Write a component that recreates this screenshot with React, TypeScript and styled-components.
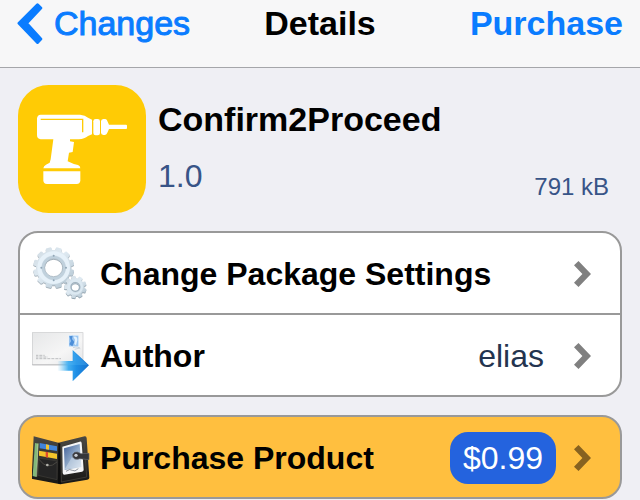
import React from "react";
import styled, { createGlobalStyle } from "styled-components";

const GlobalStyle = createGlobalStyle`
  *, *::before, *::after { box-sizing: border-box; }
  body {
    margin: 0;
    background: #efeff4;
    color: #000;
    font-family: "Liberation Sans", Arial, sans-serif;
  }
  button { font: inherit; color: inherit; border: 0; background: none; padding: 0; cursor: pointer; }
  h1, h2, p, ul { margin: 0; padding: 0; }
  svg { display: block; flex: none; }
`;

const NavBar = styled.header`
  display: grid;
  grid-template-columns: 1fr auto 1fr;
  align-items: start;
  height: 68px;
  padding: 3px 17px 0;
  background: #f7f7f8;
  border-bottom: 1px solid #a5a6aa;
  font-size: 34px;
  line-height: 40px;
`;

const BackLink = styled.a`
  display: flex;
  gap: 11px;
  justify-self: start;
  color: #0a7cff;
  text-decoration: none;
  -webkit-text-stroke: 1px currentColor;
`;

const NavTitle = styled.h1`
  font-size: 34px;
  line-height: 40px;
`;

const NavAction = styled.button`
  && {
    justify-self: end;
    color: #0a7cff;
    font-weight: 700;
  }
`;

const Content = styled.main`
  display: flex;
  flex-direction: column;
  gap: 18px;
  padding: 17px 18px 0;
`;

const PackageHeader = styled.section`
  display: flex;
  gap: 12px;
`;

const PackageText = styled.div`
  flex: 1;
  display: flex;
  flex-direction: column;
  gap: 19px;
  padding-top: 14px;
`;

const PackageName = styled.h2`
  font-size: 34px;
  line-height: 40px;
`;

const Version = styled.p`
  color: #385487;
  font-size: 32px;
  line-height: 36px;
`;

const Size = styled.p`
  align-self: flex-end;
  padding: 0 13px 12px 0;
  color: #385487;
  font-size: 24px;
  line-height: 28px;
`;

const Card = styled.ul<{ $highlight?: boolean }>`
  list-style: none;
  border: 2px solid #999;
  border-radius: 20px;
  overflow: hidden;
  background: ${(p) => (p.$highlight ? "#ffbf3f" : "#fff")};
`;

const CardItem = styled.li`
  & + & { border-top: 2px solid #999; }
`;

const RowButton = styled.button`
  && {
    display: flex;
    align-items: center;
    width: 100%;
    height: 80px;
    padding: 2px 29px 0 12px;
    font-size: 32px;
    line-height: 36px;
    text-align: left;
  }
`;

const RowLabel = styled.span`
  flex: 1;
  margin-left: 10px;
  font-weight: 700;
`;

const RowValue = styled.span`
  margin-right: 30px;
  color: #24344f;
`;

const Price = styled.span`
  margin-right: 18px;
  padding: 8px 13px;
  border-radius: 18px;
  background: #2463de;
  color: #fff;
`;

function BackChevron() {
  return (
    <svg width="26" height="42" viewBox="0 0 26 42" aria-hidden="true">
      <path
        d="M2 20.300 L20.500 1.800 L23.800 5 L9.500 20.300 L23.800 36 L20.500 39.500 Z"
        fill="#0a7cff"
        stroke="#0a7cff"
        strokeWidth="3"
        strokeLinejoin="round"
      />
    </svg>
  );
}

function Disclosure({ color = "#808080" }: { color?: string }) {
  return (
    <svg width="17" height="26" viewBox="0 0 17 26" aria-hidden="true">
      <path d="M4.500 0 L17 13 L4.500 26 L0 21.700 L8.400 13 L0 4.300 Z" fill={color} />
    </svg>
  );
}

function DrillIcon() {
  return (
    <svg width="128" height="128" viewBox="24 15 384 384" role="img" aria-label="Tweak">
      <rect x="24" y="15" width="384" height="384" rx="92" fill="#ffcb05" />
      <g fill="#fff">
        <path d="M92 104 H210 Q226 106 234 113 L246 119 V163 L234 168 Q224 177 206 178 H180 V184 L192 186 L188 216 L177 218 L173 244 Q188 252 204 255 Q211 257 211 265 H100 Q101 257 108 254 L119 248 L122 238 L130 178 H92 Q81 176 81 165 V115 Q82 105 92 104 Z" />
        <path d="M100 274 H211 V301 Q211 312 200 312 H111 Q100 312 100 301 Z" />
        <rect x="250" y="117" width="20" height="49" rx="7" />
        <path d="M280 117 H286 Q291 118 293 125 L297 134 H348 Q351 134 351 137 V145 Q351 147 348 147 H297 L292 158 Q290 164 285 165 H280 Q273 164 273 158 V124 Q273 118 280 117 Z" />
      </g>
      <path d="M92 118 H218 V157" fill="none" stroke="#ffcb05" strokeWidth="4" />
    </svg>
  );
}

function gearPath(cx: number, cy: number, outer: number, root: number, hole: number, teeth: number) {
  const points: string[] = [];
  const step = (Math.PI * 2) / teeth;
  const profile: [number, number][] = [[-0.34, root], [-0.3, outer - 3], [-0.22, outer], [0.22, outer], [0.3, outer - 3], [0.34, root]];
  for (let i = 0; i < teeth; i++) {
    for (const [offset, r] of profile) {
      const a = (i + 0.5 + offset) * step;
      points.push(`${(cx + r * Math.cos(a)).toFixed(1)} ${(cy + r * Math.sin(a)).toFixed(1)}`);
    }
  }
  return `M${points.join("L")}Z M${cx - hole} ${cy}a${hole} ${hole} 0 1 0 ${hole * 2} 0a${hole} ${hole} 0 1 0 ${-hole * 2} 0Z`;
}

function GearsIcon() {
  const big = gearPath(131, 128, 62, 53, 27, 12);
  const small = gearPath(196, 186, 34, 27, 11, 9);
  return (
    <svg width="58" height="56" viewBox="66 63 174 168" aria-hidden="true">
      <defs>
        <linearGradient id="steel" x1="0" y1="0" x2="1" y2="1">
          <stop offset="0" stopColor="#cfdae2" />
          <stop offset="0.45" stopColor="#dfeaf2" />
          <stop offset="1" stopColor="#adc0cd" />
        </linearGradient>
      </defs>
      <path d={big} transform="translate(0 3)" fill="#a5b1ba" fillRule="evenodd" />
      <path d={big} fill="url(#steel)" fillRule="evenodd" />
      <circle cx="131" cy="128" r="43" fill="none" stroke="#e6f1f9" strokeWidth="12" />
      <circle cx="131" cy="128" r="32" fill="none" stroke="#c0d1dd" strokeWidth="8" />
      <circle cx="131" cy="128" r="27" fill="none" stroke="#9eadb8" strokeWidth="2" />
      <g fill="#91a6b6">
        <circle cx="131" cy="92" r="3" />
        <circle cx="131" cy="166" r="3" />
        <circle cx="94" cy="128" r="3" />
        <circle cx="168" cy="128" r="3" />
      </g>
      <path d={small} transform="translate(0 3)" fill="#95a5b0" fillRule="evenodd" />
      <path d={small} fill="url(#steel)" fillRule="evenodd" />
      <circle cx="196" cy="186" r="20" fill="none" stroke="#dce9f2" strokeWidth="6" />
      <circle cx="196" cy="186" r="13" fill="none" stroke="#9fb1be" strokeWidth="4" />
    </svg>
  );
}

function MailIcon() {
  return (
    <svg width="58" height="56" viewBox="66 39 174 168" aria-hidden="true">
      <defs>
        <linearGradient id="paper" x1="0" y1="0" x2="1" y2="1">
          <stop offset="0" stopColor="#e6e7e8" />
          <stop offset="0.6" stopColor="#f6f6f6" />
          <stop offset="1" stopColor="#e4e5e7" />
        </linearGradient>
        <linearGradient id="arrow" x1="0" y1="0" x2="1" y2="0">
          <stop offset="0" stopColor="#6cc6f5" stopOpacity="0" />
          <stop offset="0.35" stopColor="#43aef0" />
          <stop offset="0.6" stopColor="#1e8fe6" />
          <stop offset="1" stopColor="#1672cd" />
        </linearGradient>
      </defs>
      <rect x="67" y="53" width="152" height="96" fill="url(#paper)" stroke="#c8c9cb" strokeWidth="2" />
      <path d="M67 150 H219" stroke="#a9abad" strokeWidth="2" />
      <rect x="175" y="60" width="32" height="36" fill="#e9f3fc" />
      <rect x="177" y="62" width="28" height="32" fill="#9cc6f0" />
      <path d="M178 64 L188 62 L186 72 L193 81 L187 94 L178 88 L183 78 Z" fill="#4d8fd9" />
      <path d="M190 65 Q203 62 202 76 L198 91 L193 87 L195 74 Z" fill="#e2f2ff" />
      <path d="M189 98 Q204 93 211 101 M194 103 L209 99" fill="none" stroke="#b8c4d2" strokeWidth="2" />
      <path d="M78 121 H104 M78 126 H112 M78 131 H153" stroke="#a2a4a8" strokeWidth="2" strokeDasharray="6 2 3 1" />
      <path d="M142 138 H188 V105 L237 151 L188 199 V167 H142 Z" fill="url(#arrow)" />
      <path d="M190 109 L233 150 H168 V140 H190 Z" fill="#55b8f5" opacity="0.3" />
    </svg>
  );
}

function WalletIcon() {
  return (
    <svg width="58" height="56" viewBox="66 75 174 168" aria-hidden="true">
      <defs>
        <linearGradient id="leather" x1="0" y1="0" x2="0" y2="1">
          <stop offset="0" stopColor="#4a4843" />
          <stop offset="1" stopColor="#171715" />
        </linearGradient>
        <linearGradient id="photo" x1="0" y1="0" x2="1" y2="1">
          <stop offset="0" stopColor="#415f98" />
          <stop offset="0.5" stopColor="#8fa9c8" />
          <stop offset="1" stopColor="#d8e3ef" />
        </linearGradient>
      </defs>
      <path d="M71 94 L145 113 L224 94 Q229 93 230 99 L238 218 Q238 222 232 224 L151 238 L68 222 Q64 221 65 217 Z" fill="url(#leather)" />
      <path d="M145 113 L151 116 L153 237 L144 235 Z" fill="#0e0e0e" />
      <path d="M153 119 L222 101 L230 216 L154 231 Z" fill="none" stroke="#4a473f" strokeWidth="2" />
      <path d="M75 114 L85 116 L79 216 L68 213 Z" fill="#83b879" />
      <path d="M84 115 L80 215" stroke="#c4d6a8" strokeWidth="2" />
      <path d="M89 114 L141 124 V138 L89 130 Z" fill="#4184da" />
      <path d="M108 118 L117 120 V134 L108 133 Z" fill="#f4c52e" />
      <path d="M87 137 L141 146 V162 L87 152 Z" fill="#f3c42b" />
      <path d="M107 140 L114 141 V158 L107 157 Z" fill="#dd4c2d" />
      <path d="M87 159 L141 168 V224 L84 211 Z" fill="#252525" stroke="#403e39" strokeWidth="2" />
      <path d="M87 163 Q112 198 141 171" fill="none" stroke="#4a4843" strokeWidth="3" />
      <circle cx="112" cy="180" r="4" fill="#b3b3ac" />
      <path d="M157 125 L209 110 Q214 109 215 114 L221 194 Q221 199 216 200 L163 209 Q158 209 158 203 Z" fill="#f5f6f7" />
      <path d="M162 130 L209 117 L214 186 L164 195 Z" fill="url(#photo)" />
      <path d="M164 193 L186 156 L196 166 L212 150 L214 186 Z" fill="#e5edf4" opacity="0.4" />
      <path d="M168 199 Q180 190 187 196 T205 191" fill="none" stroke="#5b626d" strokeWidth="2" />
      <path d="M237 145 V164 L209 161 Q195 166 189 157 Q185 147 194 142 Q202 138 213 146 Z" fill="#35363a" stroke="#65676c" strokeWidth="2" />
      <circle cx="198" cy="151" r="5" fill="#c8ccd3" />
    </svg>
  );
}

export default function App() {
  return (
    <>
      <GlobalStyle />
      <NavBar>
        <BackLink href="#changes">
          <BackChevron />
          Changes
        </BackLink>
        <NavTitle>Details</NavTitle>
        <NavAction type="button">Purchase</NavAction>
      </NavBar>
      <Content>
        <PackageHeader>
          <DrillIcon />
          <PackageText>
            <PackageName>Confirm2Proceed</PackageName>
            <Version>1.0</Version>
          </PackageText>
          <Size>791 kB</Size>
        </PackageHeader>
        <Card>
          <CardItem>
            <RowButton type="button">
              <GearsIcon />
              <RowLabel>Change Package Settings</RowLabel>
              <Disclosure />
            </RowButton>
          </CardItem>
          <CardItem>
            <RowButton type="button">
              <MailIcon />
              <RowLabel>Author</RowLabel>
              <RowValue>elias</RowValue>
              <Disclosure />
            </RowButton>
          </CardItem>
        </Card>
        <Card $highlight>
          <CardItem>
            <RowButton type="button">
              <WalletIcon />
              <RowLabel>Purchase Product</RowLabel>
              <Price>$0.99</Price>
              <Disclosure color="#876220" />
            </RowButton>
          </CardItem>
        </Card>
      </Content>
    </>
  );
}
